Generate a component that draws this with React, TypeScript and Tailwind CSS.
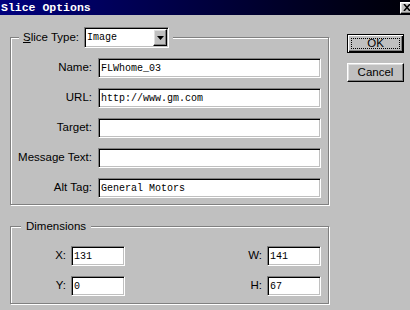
import React from 'react';

const sunken =
  'bg-white border border-t-[#808080] border-l-[#808080] border-b-white border-r-white shadow-[inset_1px_1px_0_#000,inset_-1px_-1px_0_#c0c0c0]';
const raised =
  'bg-[#c0c0c0] border border-t-white border-l-white border-b-black border-r-black shadow-[inset_-1px_-1px_0_#808080,inset_1px_1px_0_#dfdfdf]';
const mono = "font-['Liberation_Mono',monospace] text-[10px] text-black";

const TextField: React.FC<{ value?: string; width: string }> = ({ value = '', width }) => (
  <div className={`${sunken} ${width} h-[20px] flex items-center pl-[2px] ${mono}`}>{value}</div>
);

const Row: React.FC<{ label: string; value?: string }> = ({ label, value }) => (
  <div className="flex items-center h-[20px]">
    <span className="w-[81px] text-right">{label}</span>
    <div className="ml-[6px]">
      <TextField value={value} width="w-[223px]" />
    </div>
  </div>
);

const DimField: React.FC<{ label: string; value: string; labelWidth?: string }> = ({ label, value, labelWidth }) => (
  <div className="flex items-center h-[20px]">
    <span className={`${labelWidth ?? ''} text-right`}>{label}</span>
    <div className="ml-[5px]">
      <TextField value={value} width="w-[54px]" />
    </div>
  </div>
);

const App: React.FC = () => {
  const fields = [
    { label: 'Name:', value: 'FLWhome_03' },
    { label: 'URL:', value: 'http://www.gm.com' },
    { label: 'Target:', value: '' },
    { label: 'Message Text:', value: '' },
    { label: 'Alt Tag:', value: 'General Motors' },
  ];

  return (
    <div className="w-[410px] h-[310px] bg-[#c0c0c0] overflow-hidden flex flex-col font-['Liberation_Sans',Arial,sans-serif] text-[11.5px] text-black">
      {/* Title bar */}
      <div className="h-[15px] bg-gradient-to-r from-[#00007e] to-[#000008] flex items-center justify-between">
        <span className="pl-[1px] font-['Liberation_Mono',monospace] font-bold text-[11.5px] text-white leading-none">
          Slice Options
        </span>
        <div className={`${raised} w-[14px] h-[12px] -mr-[4px] flex items-center justify-center`}>
          <svg width="8" height="7" viewBox="0 0 8 7">
            <path d="M1 0 L7 7 M7 0 L1 7" stroke="#000" strokeWidth="1.5" />
          </svg>
        </div>
      </div>

      {/* Body */}
      <div className="flex pl-[10px]">
        <div className="w-[319px] flex flex-col">
          <fieldset className="mt-[12px] border border-[#808080] shadow-[inset_1px_1px_0_#fff,1px_1px_0_#fff] pt-[10px] pb-[6px]">
            <legend className="ml-[8px] px-[4px] bg-[#c0c0c0]">
              <div className="flex items-center h-[21px]">
                <span>
                  <span className="underline">S</span>lice Type:
                </span>
                <div className={`${sunken} ml-[5px] w-[85px] h-[21px] flex items-center justify-between pl-[2px] pr-[1px] ${mono}`}>
                  <span>Image</span>
                  <div className={`${raised} w-[14px] h-[17px] flex items-center justify-center`}>
                    <svg width="7" height="4" viewBox="0 0 7 4">
                      <path d="M0 0 H7 L3.5 4 Z" fill="#000" />
                    </svg>
                  </div>
                </div>
              </div>
            </legend>
            <div className="flex flex-col gap-[10px]">
              {fields.map(f => (
                <Row key={f.label} label={f.label} value={f.value} />
              ))}
            </div>
          </fieldset>

          <fieldset className="mt-[14px] border border-[#808080] shadow-[inset_1px_1px_0_#fff,1px_1px_0_#fff] pt-[13px] pb-[7px]">
            <legend className="ml-[10px] px-[5px] bg-[#c0c0c0] leading-[14px]">Dimensions</legend>
            <div className="flex flex-col gap-[10px] pr-[7px]">
              <div className="flex justify-between">
                <DimField label="X:" value="131" labelWidth="w-[55px]" />
                <DimField label="W:" value="141" />
              </div>
              <div className="flex justify-between">
                <DimField label="Y:" value="0" labelWidth="w-[55px]" />
                <DimField label="H:" value="67" />
              </div>
            </div>
          </fieldset>
        </div>

        {/* Buttons */}
        <div className="ml-[18px] mt-[19px] flex flex-col gap-[10px]">
          <button className="w-[57px] h-[19px] border border-black bg-[#c0c0c0] shadow-[inset_1px_1px_0_#fff,inset_-1px_-1px_0_#000,inset_-2px_-2px_0_#808080] p-[3px] flex">
            <span className="flex-1 border border-dotted border-black flex items-center justify-center leading-none">OK</span>
          </button>
          <button className={`${raised} w-[57px] h-[19px] flex items-center justify-center leading-none`}>Cancel</button>
        </div>
      </div>
    </div>
  );
};

export default App;
